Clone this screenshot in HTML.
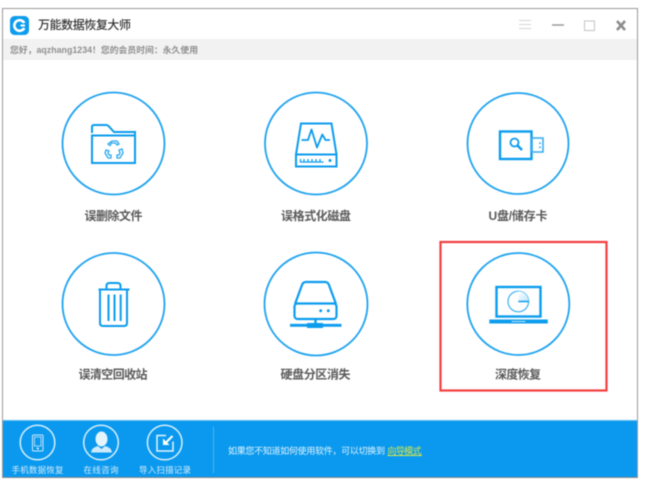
<!DOCTYPE html>
<html><head><meta charset="utf-8">
<style>
html,body{margin:0;padding:0;background:#fff;width:645px;height:483px;overflow:hidden}
svg{display:block;filter:blur(.45px)}
text{font-family:"Liberation Sans","Noto Sans CJK SC",sans-serif}
.l{font-size:12px;fill:#5a5a5a;font-weight:700;text-anchor:middle}
.b{font-size:8.500px;fill:#d5ecfb;text-anchor:middle}
.i{fill:none;stroke:#0c9cee;stroke-width:2}
.c{fill:#fff;stroke:#1fa3ef;stroke-width:1.800}
.w{fill:none;stroke:#d9effc;stroke-width:1.500}
</style></head>
<body>
<svg width="645" height="483" viewBox="0 0 645 483" xmlns="http://www.w3.org/2000/svg">
<defs><linearGradient id="g" x1="0" y1="0" x2="1" y2="1"><stop offset="0" stop-color="#fff"/><stop offset="1" stop-color="#bfe5fb"/></linearGradient></defs>
<rect x="2.500" y="8.500" width="635" height="469" fill="#fff" stroke="#9a9a9a"/>
<rect x="3" y="39" width="634" height="21" fill="#f2f2f2"/>
<rect x="10" y="16" width="19" height="19" rx="4.500" fill="#0e9cec"/>
<path d="M24.300 23A5.300 5.300 0 1 0 24.300 28" fill="none" stroke="#fff" stroke-width="2.600"/>
<path d="M20.500 25.500h4.500" stroke="#fff" stroke-width="2"/>
<text x="38" y="29" font-size="12" fill="#333" font-weight="500" textLength="93">万能数据恢复大师</text>
<text x="10" y="53" font-size="8.800" fill="#8f8f8f" font-weight="700" textLength="188">您好，aqzhang1234！您的会员时间：永久使用</text>
<!-- window controls -->
<path d="M519 20.500h12M519 24.500h12M519 28.500h12" stroke="#d4d4d4" stroke-width="1"/>
<path d="M552 25h12" stroke="#9a9a9a" stroke-width="1.500"/>
<rect x="584.500" y="21" width="10" height="9.500" fill="none" stroke="#c4c4c4"/>
<path d="M617 21l8 9M625 21l-8 9" stroke="#8c8c8c" stroke-width="2.600"/>

<!-- circles -->
<circle class="c" cx="113.500" cy="143.500" r="51"/>
<circle class="c" cx="316" cy="143.500" r="51"/>
<circle class="c" cx="518" cy="143.500" r="50.500"/>
<circle class="c" cx="113.500" cy="304" r="51"/>
<circle class="c" cx="316" cy="304" r="51.500"/>
<circle class="c" cx="518.300" cy="304" r="51"/>

<!-- folder -->
<path class="i" d="M92 133v-6q0-2 2-2h12q1.500 0 2.500 1l5.500 6h21v3"/>
<rect class="i" x="92" y="135.500" width="43" height="27.500"/>
<g fill="none" stroke="#2aa8ef" stroke-width="1.300">
<path d="M108 144l4-3h5l2 3-2 1-1.500-2h-4l-1.500 2.500z"/>
<path d="M106 150l-1 3 3 5h3v-3h-2l-1-2 1-2z"/>
<path d="M122 149l1 4-3 5h-3v-3h2l1-2-1-3z"/>
</g>

<!-- HDD -->
<path class="i" d="M296 154.500L301 123.500h30.500L336.500 154.500"/>
<rect class="i" x="296" y="154.500" width="40.500" height="12"/>
<path d="M301.500 140H308L311.500 129.500 317 147.500 322.300 134.500 325.500 140H330" fill="none" stroke="#0c9cee" stroke-width="1.800" stroke-linejoin="round"/>
<path d="M300.500 159v3h23M304 159v3M308 159v3M312 159v3M316 159v3M320 159v3" fill="none" stroke="#0c9cee" stroke-width="1.300"/>
<circle cx="330" cy="160.500" r="1.500" fill="#0c9cee"/>

<!-- USB -->
<rect x="500" y="131.500" width="31.500" height="27.500" fill="none" stroke="#0c9cee" stroke-width="2.400"/>
<rect x="532" y="138" width="11" height="14" fill="none" stroke="#3fb0f1" stroke-width="1.600"/>
<path d="M540 142.500v1.500M540 146.500v1.500" stroke="#0c9cee" stroke-width="1.500"/>
<circle cx="514.500" cy="142.500" r="4" fill="none" stroke="#0c9cee" stroke-width="1.800"/>
<path d="M517.500 145.500L522 150" stroke="#0c9cee" stroke-width="2.400"/>

<!-- trash -->
<path class="i" d="M98.500 289.500H129.500M100 289.500V323q0 3 3 3H124q3 0 3-3V289.500M106.500 289v-3q0-3 3-3h8q3 0 3 3v3"/>
<path class="i" d="M108.500 294.500V321M114.500 294.500V321M120.700 294.500V321"/>

<!-- HDD 2 -->
<path d="M295 304L302 285q1-3 4-3H325q3 0 4 3L336 304" fill="none" stroke="#0c9cee" stroke-width="2.200"/>
<rect x="294.500" y="303.500" width="42" height="15.500" rx="3" fill="none" stroke="#0c9cee" stroke-width="2.200"/>
<circle cx="320.700" cy="310.700" r="1.500" fill="#0c9cee"/><circle cx="328.300" cy="310.700" r="1.500" fill="#0c9cee"/>
<path d="M315.500 319v6" stroke="#0c9cee" stroke-width="2.400"/>
<path d="M290 325.300H341.500" stroke="#0c9cee" stroke-width="2.800"/>
<path d="M307 325.500H323" stroke="#0c9cee" stroke-width="5"/>

<!-- laptop -->
<rect x="496.500" y="287" width="44" height="29.500" fill="none" stroke="#0c9cee" stroke-width="2.400"/>
<rect x="489.300" y="319.500" width="58.500" height="4" fill="#0d9dee"/>
<rect x="511.500" y="321" width="14" height="1" fill="#bfe5fb"/>
<circle cx="518.300" cy="301.500" r="10.300" fill="none" stroke="#3fb0f1" stroke-width="1.200"/>
<path d="M518.300 301.500V291.200A10.300 10.300 0 0 1 528.600 301.500Z" fill="url(#g)"/>
<path d="M518.300 301.500H529" stroke="#0c9cee" stroke-width="1.500"/>

<!-- labels -->
<text class="l" x="113.500" y="220" textLength="58">误删除文件</text>
<text class="l" x="316" y="220" textLength="70">误格式化磁盘</text>
<text class="l" x="518" y="220" textLength="59">U盘/储存卡</text>
<text class="l" x="113" y="378.500" textLength="69">误清空回收站</text>
<text class="l" x="315.500" y="378.500" textLength="70">硬盘分区消失</text>
<text class="l" x="518" y="378.500" textLength="46">深度恢复</text>

<!-- red box -->
<rect x="440.500" y="242" width="166" height="148.500" fill="none" stroke="#f23f3f" stroke-width="2.200"/>

<!-- bottom bar -->
<rect x="3" y="420" width="634" height="57" fill="#0a99ee"/>
<rect x="3" y="420" width="634" height="1" fill="#5cb9f2"/>
<path d="M2 477.500H638" stroke="#8a8a8a"/>
<circle class="w" cx="37.500" cy="442.500" r="17.300"/>
<circle class="w" cx="101" cy="442.500" r="17.300"/>
<circle class="w" cx="164.700" cy="442.500" r="17.300"/>
<!-- phone -->
<rect x="32.500" y="435" width="10.500" height="16" rx="1" fill="none" stroke="#cfeafb" stroke-width="1"/>
<rect x="34.500" y="437" width="6.500" height="9" fill="none" stroke="#cfeafb" stroke-width=".8"/>
<circle cx="37.800" cy="448.500" r="1" fill="#fff"/>
<!-- person -->
<ellipse cx="101.500" cy="439" rx="6" ry="7.500" fill="#e4f4fd"/>
<path d="M91 452.500q.5-5 7-6.500l3.500 3 3.500-3q6.500 1.500 7 6.500z" fill="#cfeafb"/>
<!-- import -->
<path d="M166 435.500H157V451H173V441.500" fill="none" stroke="#e4f4fd" stroke-width="1.500"/>
<path d="M172.500 436L165.500 443" stroke="#fff" stroke-width="2"/>
<path d="M163 438.500V445H169.500Z" fill="#fff"/>

<text class="b" x="37.500" y="473" textLength="52">手机数据恢复</text>
<text class="b" x="101" y="473" textLength="35">在线咨询</text>
<text class="b" x="165" y="473" textLength="52">导入扫描记录</text>
<path d="M213.500 427V473" stroke="#4fb4ef"/>
<text x="228" y="454" font-size="9" fill="#e3f3fd" textLength="157">如果您不知道如何使用软件，可以切换到</text>
<text x="387.500" y="454" font-size="9" fill="#d9e845" textLength="34">向导模式</text>
<path d="M387.500 455.500H422" stroke="#d9e845" stroke-width=".9"/>
</svg>
</body></html>
